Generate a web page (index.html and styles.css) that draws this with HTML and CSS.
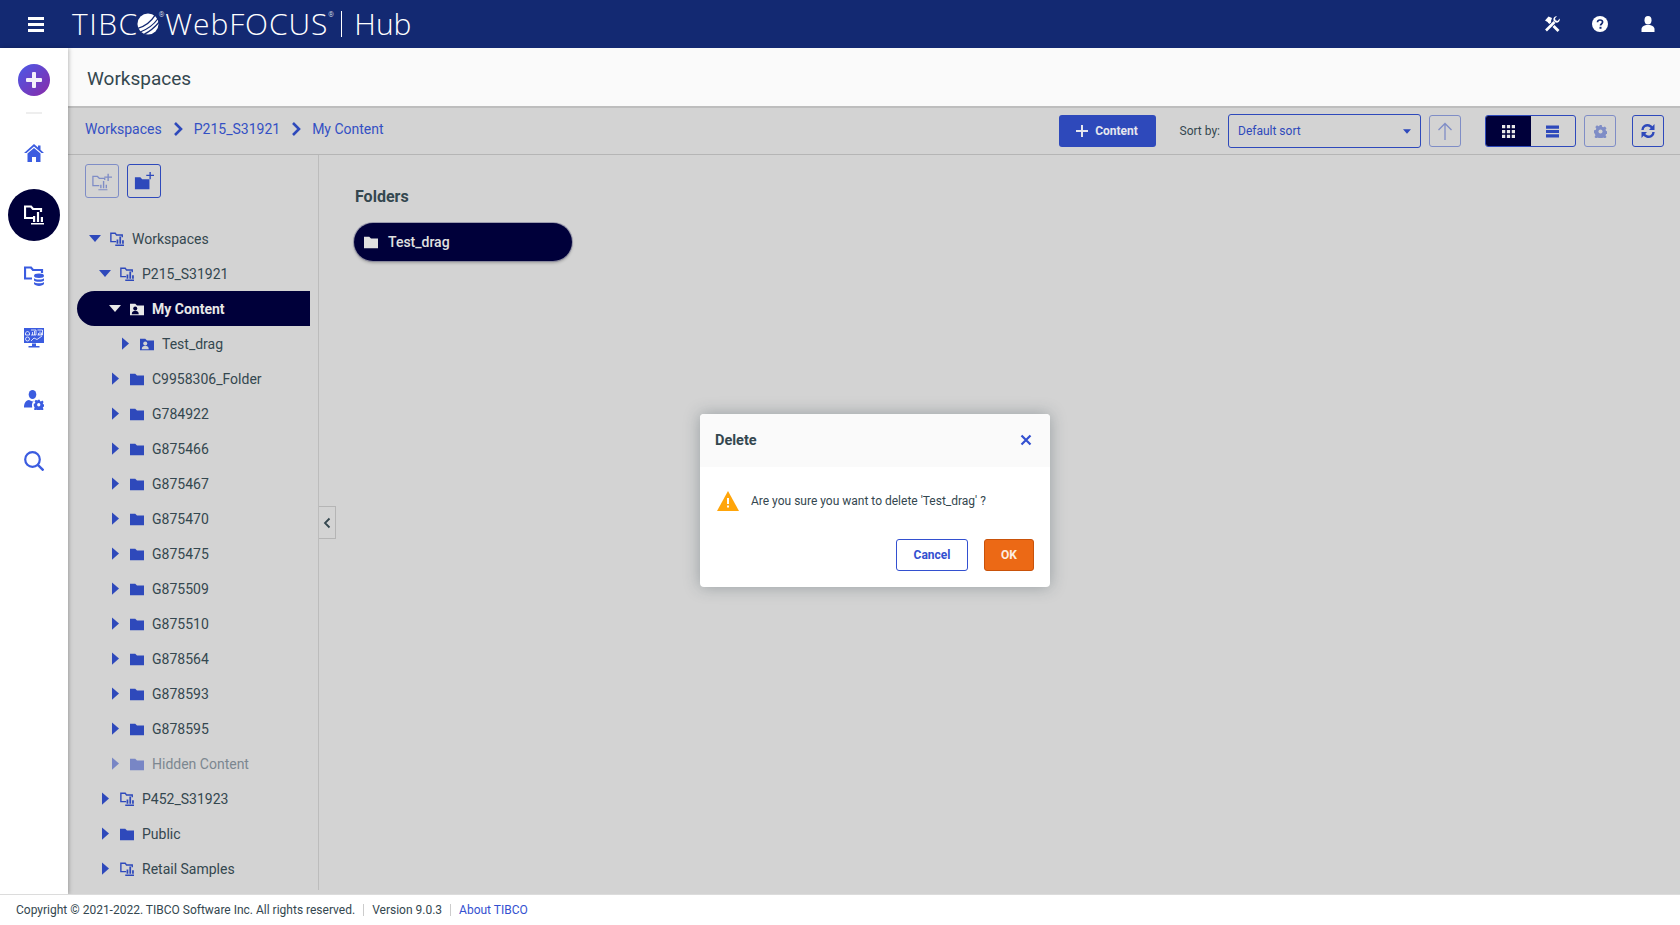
FILE: index.html
```html
<!DOCTYPE html>
<html lang="en">
<head>
    <meta charset="UTF-8">
    <meta name="viewport" content="width=device-width, initial-scale=1.0">
    <title>WebFOCUS Hub</title>
    <link rel="stylesheet" href="styles.css">
</head>
<body>
    <svg class="icon-defs" width="0" height="0">
        <symbol id="i-folder" viewBox="0 0 16 14"><path d="M0 1h6l2 2h8v11H0z" fill="currentColor"/></symbol>
        <symbol id="i-workspace" viewBox="0 0 16 16"><path d="M7 11H1V1.500h5l1.500 2H14V6" fill="none" stroke="currentColor" stroke-width="1.600"/><path d="M6 14.300h10V16H6zM7.500 8.500h2v4.800h-2zM10.700 5h2v8.300h-2zM13.800 9.500h2v3.800h-2z" fill="currentColor"/></symbol>
        <symbol id="i-mycontent" viewBox="0 0 16 14"><path d="M0 1h6l2 2h8v11H0z" fill="currentColor"/><circle cx="6" cy="6.500" r="2.300" fill="var(--cut)"/><path d="M2 13c0-3 2-4 4-4s4 1 4 4z" fill="var(--cut)"/></symbol>
        <symbol id="i-right" viewBox="0 0 8 14"><path d="M0 0l8 7-8 7z" fill="currentColor"/></symbol>
        <symbol id="i-down" viewBox="0 0 14 8"><path d="M0 0h14L7 8z" fill="currentColor"/></symbol>
        <symbol id="i-chevron" viewBox="0 0 10 14"><path d="M2 1l6 6-6 6" fill="none" stroke="currentColor" stroke-width="2.600"/></symbol>
        <symbol id="i-gear" viewBox="0 0 16 16"><path d="M6.500 0h3l.4 2.200 1.500.7 2-1.200 2 2.200-1.200 1.800.7 1.600 2.100.5v3l-2.100.4-.7 1.500 1.200 2-2 2-2-1.200-1.500.7-.4 2.200h-3l-.4-2.200-1.500-.7-2 1.200-2-2 1.200-2-.7-1.500L0 9.500v-3l2.100-.5.700-1.600L1.600 2.600l2-2.200 2 1.200 1.500-.7z" fill="currentColor"/><circle cx="8" cy="8" r="2.500" fill="var(--cut)"/></symbol>
    </svg>

    <header class="topbar">
        <div class="menu-btn"><span></span><span></span><span></span></div>
        <div class="logo">
            <span class="logo-tibco">TIBC</span>
            <svg class="logo-ball" viewBox="0 0 24 24"><circle cx="12" cy="12" r="11.500" fill="#fff"/><path d="M0 17C8 15 15 10 20 2M3 21C11 18 18 13 23 6M8 23C14 20 19 16 24 10" fill="none" stroke="#132972" stroke-width="1.400"/></svg>
            <sup class="logo-reg">®</sup>
            <span class="logo-web">WebFOCUS</span>
            <sup class="logo-reg">®</sup>
            <span class="logo-bar"></span>
            <span class="logo-hub">Hub</span>
        </div>
        <div class="top-icons">
            <svg class="top-icon" viewBox="0 0 16 16"><path d="M1 4.500L4.500 .500 8 2 7 5 5 7.500 3.500 6z" fill="#fff"/><path d="M5 5.500l9.500 9.500" stroke="#fff" stroke-width="2.800"/><path d="M2 14.500l8.500-8.500" stroke="#132972" stroke-width="4.200"/><path d="M2 14.500l8.500-8.500" stroke="#fff" stroke-width="2.600"/><path d="M15.700 2.500L13.500 5 11.500 4.300 11 2.300 13 .300C10.800-.200 8.800 1.800 9.500 4.500l2 2c2.700.7 4.800-1.200 4.200-4z" fill="#fff"/></svg>
            <svg class="top-icon" viewBox="0 0 16 16"><circle cx="8" cy="8" r="8" fill="#fff"/><path d="M5.500 6.200C5.600 4.700 6.600 4 8 4c1.500 0 2.600.8 2.600 2.100 0 1.900-2.100 1.800-2.100 3.400" fill="none" stroke="#132972" stroke-width="1.700"/><rect x="7.500" y="10.800" width="2" height="2" fill="#132972"/></svg>
            <svg class="top-icon" viewBox="0 0 16 16"><ellipse cx="8" cy="4.200" rx="3.500" ry="4.200" fill="#fff"/><path d="M1.500 16v-3c0-2.500 3-3.500 4.500-4h4c1.500.5 4.500 1.500 4.500 4v3z" fill="#fff"/></svg>
        </div>
    </header>

    <div class="app">
        <nav class="sidebar">
            <div class="add-btn"><span class="add-h"></span><span class="add-v"></span></div>
            <div class="side-rule"></div>
            <div class="side-item">
                <svg class="side-icon" viewBox="0 0 20 18"><path d="M10 0l4 3.500V1.500h2.500v4.200L20 9h-2.500L10 2.500 2.500 9H0z" fill="currentColor"/><path d="M3.500 9.500L10 4l6.500 5.500V18H12v-5H8v5H3.500z" fill="currentColor"/></svg>
            </div>
            <div class="side-item">
                <div class="side-active">
                    <svg class="side-icon" viewBox="0 0 20 20"><path d="M9 13H1V1.500h6l2 2.500h8v3" fill="none" stroke="currentColor" stroke-width="2.200"/><path d="M7 18h13v1.600H7zM9 11h2.200v6H9zM12.900 7h2.200v10h-2.200zM16.800 12H19v5h-2.200z" fill="currentColor"/></svg>
                </div>
            </div>
            <div class="side-item">
                <svg class="side-icon" viewBox="0 0 20 20"><path d="M8 12.500H1V1.500h6l2 2.500h9v3" fill="none" stroke="currentColor" stroke-width="2.200"/><ellipse cx="15" cy="9.800" rx="5" ry="2.200" fill="currentColor"/><path d="M10 12.200c1 1.800 9 1.800 10 0v2.200c-1 1.800-9 1.800-10 0zM10 16c1 1.800 9 1.800 10 0v1.800c-1 2.800-9 2.800-10 0z" fill="currentColor"/></svg>
            </div>
            <div class="side-item">
                <svg class="side-icon" viewBox="0 0 20 20"><path d="M0 0h20v15H0z" fill="currentColor"/><path d="M1.500 5l2-2 2 2v2h-4zM1.500 11a2 2 0 1 0 4 0 2 2 0 1 0-4 0M7 2h5v5H7M8.500 7V4M10.500 7V3M13.500 2h5v5h-5M14.500 7V5M16 7V3.500M17.500 7V4.500M7 13l3-3 3 1.500 5-3.500" fill="none" stroke="#fff" stroke-width=".8"/><path d="M8 15.500h4V18h3.500v1.500h-11V18H8z" fill="currentColor"/></svg>
            </div>
            <div class="side-item">
                <svg class="side-icon" viewBox="0 0 20 20"><ellipse cx="8.500" cy="4.500" rx="3.800" ry="4.500" fill="currentColor"/><path d="M0 17.500c0-4 1.500-7 5-7.500l3.500 1.500 2-1.200c-2 1.500-3 3.500-2.300 7.200z" fill="currentColor"/><use href="#i-gear" x="9.500" y="9.500" width="10.500" height="10.500"/></svg>
            </div>
            <div class="side-item">
                <svg class="side-icon" viewBox="0 0 20 20"><circle cx="8.500" cy="8.500" r="7.300" fill="none" stroke="currentColor" stroke-width="2.200"/><path d="M13.800 13.800L19.500 19.500" stroke="currentColor" stroke-width="2.400"/></svg>
            </div>
        </nav>

        <main class="main">
            <div class="title-bar">Workspaces</div>
            <div class="content-area">
                <div class="toolbar">
                    <div class="breadcrumbs">
                        <a>Workspaces</a>
                        <svg class="crumb-sep"><use href="#i-chevron"/></svg>
                        <a>P215_S31921</a>
                        <svg class="crumb-sep"><use href="#i-chevron"/></svg>
                        <a>My Content</a>
                    </div>
                    <div class="tools">
                        <button class="btn-content"><span class="plus"></span>Content</button>
                        <span class="sort-label">Sort by:</span>
                        <div class="sort-select">Default sort<svg class="sort-caret"><use href="#i-down"/></svg></div>
                        <div class="tool-btn disabled up-btn">
                            <svg class="tool-icon" viewBox="0 0 16 18"><path d="M8 18V2M1.500 8L8 1.500 14.500 8" fill="none" stroke="currentColor" stroke-width="1.300"/></svg>
                        </div>
                        <div class="view-toggle">
                            <div class="view-btn active">
                                <svg class="tool-icon small" viewBox="0 0 12 12"><path d="M0 0h3v3H0zM4.500 0h3v3h-3zM9 0h3v3H9zM0 4.500h3v3H0zM4.500 4.500h3v3h-3zM9 4.500h3v3H9zM0 9h3v3H0zM4.500 9h3v3h-3zM9 9h3v3H9z" fill="currentColor"/></svg>
                            </div>
                            <div class="view-btn">
                                <svg class="tool-icon small" viewBox="0 0 12 12"><path d="M0 .500h12v3H0zM0 4.700h12v2.600H0zM0 8.500h12v3H0z" fill="currentColor"/></svg>
                            </div>
                        </div>
                        <div class="tool-btn disabled gear-btn"><svg class="tool-icon small"><use href="#i-gear"/></svg></div>
                        <div class="tool-btn">
                            <svg class="tool-icon refresh" viewBox="0 0 14 16"><path d="M1.500 7C1.500 3.500 5 1.500 8 2.500c1.500.5 2.500 1.300 3.300 2.500M12.500 9c0 3.500-3.500 5.500-6.500 4.500-1.500-.5-2.500-1.300-3.300-2.500" fill="none" stroke="currentColor" stroke-width="2.400"/><path d="M13.500 1v6H8zM.5 15V9h5.500z" fill="currentColor"/></svg>
                        </div>
                    </div>
                </div>

                <div class="panes">
                    <aside class="tree-pane">
                        <div class="tree-actions">
                            <div class="tree-btn disabled">
                                <svg class="tree-btn-icon" viewBox="0 0 22 22"><path d="M8 16H1V6h5l2 2h6v2" fill="none" stroke="currentColor" stroke-width="1.400"/><path d="M7 20h10v1.200H7zM9 15h1.500v4H9zM12 11h1.500v8H12zM15 15h1.500v4H15zM17 3h1.500v3H22v1.500h-3.500V11H17V7.500h-3.500V6H17z" fill="currentColor"/></svg>
                            </div>
                            <div class="tree-btn">
                                <svg class="tree-btn-icon" viewBox="0 0 22 22"><path d="M1 7h6l2 2h8v11H1z" fill="currentColor"/><path d="M17 1h1.500v3H22v1.500h-3.500V9H17V5.500h-3.500V4H17z" fill="currentColor"/></svg>
                            </div>
                        </div>
                        <ul class="tree">
                            <li class="tree-row level-0"><svg class="caret-down"><use href="#i-down"/></svg><svg class="node-icon"><use href="#i-workspace"/></svg>Workspaces</li>
                            <li class="tree-row level-1"><svg class="caret-down"><use href="#i-down"/></svg><svg class="node-icon"><use href="#i-workspace"/></svg>P215_S31921</li>
                            <li class="tree-row level-2 selected"><svg class="caret-down"><use href="#i-down"/></svg><svg class="node-icon"><use href="#i-mycontent"/></svg>My Content</li>
                            <li class="tree-row level-3"><svg class="caret-right"><use href="#i-right"/></svg><svg class="node-icon"><use href="#i-mycontent"/></svg>Test_drag</li>
                            <li class="tree-row level-2"><svg class="caret-right"><use href="#i-right"/></svg><svg class="node-icon"><use href="#i-folder"/></svg>C9958306_Folder</li>
                            <li class="tree-row level-2"><svg class="caret-right"><use href="#i-right"/></svg><svg class="node-icon"><use href="#i-folder"/></svg>G784922</li>
                            <li class="tree-row level-2"><svg class="caret-right"><use href="#i-right"/></svg><svg class="node-icon"><use href="#i-folder"/></svg>G875466</li>
                            <li class="tree-row level-2"><svg class="caret-right"><use href="#i-right"/></svg><svg class="node-icon"><use href="#i-folder"/></svg>G875467</li>
                            <li class="tree-row level-2"><svg class="caret-right"><use href="#i-right"/></svg><svg class="node-icon"><use href="#i-folder"/></svg>G875470</li>
                            <li class="tree-row level-2"><svg class="caret-right"><use href="#i-right"/></svg><svg class="node-icon"><use href="#i-folder"/></svg>G875475</li>
                            <li class="tree-row level-2"><svg class="caret-right"><use href="#i-right"/></svg><svg class="node-icon"><use href="#i-folder"/></svg>G875509</li>
                            <li class="tree-row level-2"><svg class="caret-right"><use href="#i-right"/></svg><svg class="node-icon"><use href="#i-folder"/></svg>G875510</li>
                            <li class="tree-row level-2"><svg class="caret-right"><use href="#i-right"/></svg><svg class="node-icon"><use href="#i-folder"/></svg>G878564</li>
                            <li class="tree-row level-2"><svg class="caret-right"><use href="#i-right"/></svg><svg class="node-icon"><use href="#i-folder"/></svg>G878593</li>
                            <li class="tree-row level-2"><svg class="caret-right"><use href="#i-right"/></svg><svg class="node-icon"><use href="#i-folder"/></svg>G878595</li>
                            <li class="tree-row level-2 hidden-node"><svg class="caret-right"><use href="#i-right"/></svg><svg class="node-icon"><use href="#i-folder"/></svg>Hidden Content</li>
                            <li class="tree-row level-1"><svg class="caret-right"><use href="#i-right"/></svg><svg class="node-icon"><use href="#i-workspace"/></svg>P452_S31923</li>
                            <li class="tree-row level-1"><svg class="caret-right"><use href="#i-right"/></svg><svg class="node-icon"><use href="#i-folder"/></svg>Public</li>
                            <li class="tree-row level-1"><svg class="caret-right"><use href="#i-right"/></svg><svg class="node-icon"><use href="#i-workspace"/></svg>Retail Samples</li>
                        </ul>
                    </aside>
                    <section class="folders">
                        <div class="collapse-tab">
                            <svg class="collapse-icon" viewBox="0 0 8 12"><path d="M6.500 1.500L2 6l4.500 4.500" fill="none" stroke="currentColor" stroke-width="1.800"/></svg>
                        </div>
                        <h3 class="folders-title">Folders</h3>
                        <div class="folder-pill"><svg class="pill-icon"><use href="#i-folder"/></svg>Test_drag</div>
                    </section>
                </div>

                <div class="modal-layer">
                    <div class="modal">
                        <div class="modal-head">
                            <span>Delete</span>
                            <svg class="modal-close" viewBox="0 0 12 12"><path d="M1.500 1.500l9 9M10.500 1.500l-9 9" stroke="currentColor" stroke-width="2.200"/></svg>
                        </div>
                        <div class="modal-body">
                            <svg class="warn-icon" viewBox="0 0 22 20"><path d="M11 0l11 20H0z" fill="#ffa50a"/><path d="M10 7h2v6h-2zM10 14.500h2v2h-2z" fill="#fff"/></svg>
                            <span>Are you sure you want to delete 'Test_drag' ?</span>
                        </div>
                        <div class="modal-foot">
                            <button class="btn-cancel">Cancel</button>
                            <button class="btn-ok">OK</button>
                        </div>
                    </div>
                </div>
            </div>
        </main>
    </div>

    <footer class="footer">
        <span>Copyright © 2021-2022. TIBCO Software Inc. All rights reserved.</span>
        <span class="foot-sep"></span>
        <span>Version 9.0.3</span>
        <span class="foot-sep"></span>
        <a>About TIBCO</a>
    </footer>
</body>
</html>
```

FILE: styles.css
```css
* {
    box-sizing: border-box;
}

body {
    margin: 0;
    height: 925px;
    display: flex;
    flex-direction: column;
    overflow: hidden;
    font-family: Roboto, sans-serif;
    font-size: 14px;
    color: #34474f;
    background: #fff;
    --cut: #d3d3d3;
}

.icon-defs {
    position: absolute;
}

/* Top bar */
.topbar {
    height: 48px;
    flex: none;
    display: flex;
    align-items: center;
    background: #132972;
    color: #fff;
}

.menu-btn {
    width: 16px;
    margin-left: 28px;
    display: flex;
    flex-direction: column;
    gap: 3px;
}

.menu-btn span {
    height: 3px;
    background: #fff;
}

.logo {
    margin-left: 28px;
    display: flex;
    align-items: center;
    font-family: "Open Sans", sans-serif;
    font-weight: 300;
    font-size: 30px;
    line-height: 48px;
}

.logo-tibco {
    letter-spacing: 1.500px;
}

.logo-ball {
    width: 22px;
    height: 22px;
    margin-left: -2px;
}

.logo-reg {
    font-size: 7px;
    line-height: 7px;
    align-self: flex-start;
    margin-top: 12px;
    font-family: Roboto, sans-serif;
}

.logo-web {
    margin-left: 1px;
    letter-spacing: 0.900px;
}

.logo-bar {
    width: 1.500px;
    height: 26px;
    background: #fff;
    margin: 0 12px 0 7px;
}

.top-icons {
    margin-left: auto;
    margin-right: 24px;
    display: flex;
    gap: 32px;
}

.top-icon {
    width: 16px;
    height: 16px;
    display: block;
}

/* Sidebar */
.app {
    flex: 1;
    display: flex;
    min-height: 0;
}

.sidebar {
    width: 68px;
    flex: none;
    background: #fff;
    box-shadow: 1px 0 4px rgba(0, 0, 0, 0.25);
    display: flex;
    flex-direction: column;
    align-items: center;
    color: #3b5ce0;
    position: relative;
    z-index: 1;
    --cut: #fff;
}

.add-btn {
    width: 32px;
    height: 32px;
    margin-top: 16px;
    border-radius: 50%;
    background: linear-gradient(135deg, #4a5ae8, #8a2aa8);
    position: relative;
}

.add-h,
.add-v {
    position: absolute;
    background: #f3f0fa;
    border-radius: 1px;
}

.add-h {
    left: 8px;
    top: 14px;
    width: 16px;
    height: 4px;
}

.add-v {
    left: 14px;
    top: 8px;
    width: 4px;
    height: 16px;
}

.side-rule {
    width: 16px;
    height: 2px;
    background: #eeeeee;
    margin-top: 16px;
    margin-bottom: 8px;
}

.side-item {
    height: 61.700px;
    width: 100%;
    display: flex;
    align-items: center;
    justify-content: center;
}

.side-icon {
    width: 20px;
    height: 20px;
    display: block;
}

.side-active {
    width: 52px;
    height: 52px;
    border-radius: 50%;
    background: #00003a;
    color: #fff;
    display: flex;
    align-items: center;
    justify-content: center;
}

/* Main */
.main {
    flex: 1;
    min-width: 0;
    display: flex;
    flex-direction: column;
}

.title-bar {
    height: 60px;
    flex: none;
    padding: 3px 0 0 19px;
    display: flex;
    align-items: center;
    background: #fafafa;
    border-bottom: 2px solid #bdbdbd;
    font-size: 19px;
}

.content-area {
    flex: 1;
    min-height: 0;
    display: flex;
    flex-direction: column;
    position: relative;
    background: #d3d3d3;
}

.toolbar {
    height: 47px;
    flex: none;
    display: flex;
    align-items: center;
    justify-content: space-between;
    border-bottom: 1px solid #b5b5b5;
}

.breadcrumbs {
    margin-left: 17px;
    margin-top: -4px;
    display: flex;
    align-items: center;
    color: #3350c4;
}

.crumb-sep {
    width: 10px;
    height: 14px;
    margin: 0 11px;
    color: #2e49bb;
}

.tools {
    display: flex;
    align-items: center;
    margin-right: 16px;
    height: 100%;
}

.btn-content {
    width: 97px;
    height: 32px;
    margin-right: 24px;
    border: none;
    border-radius: 3px;
    background: #2e49bb;
    color: #e6e6ee;
    font: 700 12px Roboto, sans-serif;
    display: flex;
    align-items: center;
    justify-content: center;
    gap: 7px;
}

.plus {
    width: 12px;
    height: 12px;
    background:
        linear-gradient(#e6e6ee, #e6e6ee) center / 12px 2px no-repeat,
        linear-gradient(#e6e6ee, #e6e6ee) center / 2px 12px no-repeat;
}

.sort-label {
    font-size: 12px;
    margin-right: 8px;
}

.sort-select {
    width: 193px;
    height: 34px;
    border: 1px solid #2e49bb;
    border-radius: 3px;
    padding-left: 9px;
    display: flex;
    align-items: center;
    justify-content: space-between;
    font-size: 12px;
    color: #2e49bb;
    margin-right: 8px;
}

.sort-caret {
    width: 8px;
    height: 5px;
    margin-right: 9px;
}

.tool-btn {
    width: 32px;
    height: 32px;
    border: 1px solid #2e49bb;
    border-radius: 3px;
    display: flex;
    align-items: center;
    justify-content: center;
    color: #2e49bb;
}

.tool-btn.disabled {
    opacity: 0.5;
}

.up-btn {
    margin-right: 24px;
}

.gear-btn {
    margin-right: 16px;
}

.tool-icon {
    width: 16px;
    height: 18px;
    display: block;
}

.tool-icon.small {
    width: 13px;
    height: 13px;
}

.tool-icon.refresh {
    width: 14px;
    height: 16px;
}

.view-toggle {
    width: 91px;
    height: 32px;
    margin-right: 8px;
    display: flex;
    border: 1px solid #2e49bb;
    border-radius: 3px;
    overflow: hidden;
}

.view-btn {
    flex: 1;
    display: flex;
    align-items: center;
    justify-content: center;
    color: #2e49bb;
}

.view-btn.active {
    background: #00003a;
    color: #e8e8e8;
}

.panes {
    flex: 1;
    min-height: 0;
    display: flex;
}

/* Folder tree */
.tree-pane {
    width: 251px;
    flex: none;
    border-right: 1px solid #bcbcbc;
    margin-bottom: 4px;
}

.tree-actions {
    display: flex;
    gap: 8px;
    margin: 9px 0 0 17px;
}

.tree-btn {
    width: 34px;
    height: 34px;
    border: 1px solid #2e49bb;
    border-radius: 3px;
    display: flex;
    align-items: center;
    justify-content: center;
    color: #2e49bb;
}

.tree-btn.disabled {
    opacity: 0.5;
}

.tree-btn-icon {
    width: 20px;
    height: 20px;
}

.tree {
    list-style: none;
    margin: 23px 0 0 9px;
    padding: 0;
    width: 233px;
}

.tree-row {
    height: 35px;
    display: flex;
    align-items: center;
    white-space: nowrap;
    border-radius: 18px 0 0 18px;
}

.level-0 { padding-left: 12px; }
.level-1 { padding-left: 22px; }
.level-2 { padding-left: 32px; }
.level-3 { padding-left: 42px; }

.tree-row.selected {
    background: #00003a;
    color: #e8e8e8;
    font-weight: 700;
    --cut: #00003a;
}

.tree-row.hidden-node {
    color: #7c8790;
}

.hidden-node svg {
    opacity: 0.55;
}

.caret-down {
    width: 12px;
    height: 7px;
    color: #2e49bb;
    margin-right: 9px;
    flex: none;
}

.caret-right {
    width: 7px;
    height: 13px;
    color: #2e49bb;
    margin: 0 11px 0 3px;
    flex: none;
}

.node-icon {
    width: 14px;
    height: 14px;
    margin-right: 8px;
    color: #2e49bb;
    flex: none;
}

.selected .caret-down,
.selected .node-icon {
    color: #e8e8e8;
}

/* Folders area */
.folders {
    flex: 1;
    position: relative;
    padding: 32px 0 0 37px;
}

.folders-title {
    margin: 0 0 17px -1px;
    font-size: 16px;
    font-weight: 700;
    line-height: 19px;
}

.folder-pill {
    width: 218px;
    height: 38px;
    margin-left: -2px;
    padding-left: 10px;
    border-radius: 19px;
    background: #00003a;
    color: #e0e0e0;
    font-weight: 500;
    display: flex;
    align-items: center;
    box-shadow: 0 0 0 1px rgba(120, 120, 150, 0.6), 0 2px 3px rgba(0, 0, 0, 0.25);
}

.pill-icon {
    width: 14px;
    height: 14px;
    margin-right: 10px;
}

.collapse-tab {
    position: absolute;
    left: 0;
    top: 351px;
    width: 17px;
    height: 33px;
    background: #d3d3d3;
    border: 1px solid #b5b5b5;
    border-left: none;
    display: flex;
    align-items: center;
    justify-content: center;
    color: #34474f;
}

.collapse-icon {
    width: 8px;
    height: 12px;
}

/* Delete dialog */
.modal-layer {
    position: absolute;
    inset: 0;
    padding: 0 0 1px 2px;
    display: flex;
    align-items: center;
    justify-content: center;
}

.modal {
    width: 350px;
    height: 173px;
    background: #fff;
    border-radius: 4px;
    box-shadow: 0 0 16px rgba(40, 60, 70, 0.35);
    display: flex;
    flex-direction: column;
    overflow: hidden;
}

.modal-head {
    height: 53px;
    flex: none;
    background: #fafafa;
    padding: 0 18px 1px 15px;
    display: flex;
    align-items: center;
    justify-content: space-between;
    font-weight: 700;
    font-size: 14.500px;
}

.modal-close {
    width: 12px;
    height: 12px;
    color: #3350d0;
}

.modal-body {
    height: 67px;
    flex: none;
    padding-left: 17px;
    display: flex;
    align-items: center;
    font-size: 12px;
    gap: 12px;
}

.warn-icon {
    width: 22px;
    height: 20px;
}

.modal-foot {
    margin-top: 5px;
    display: flex;
    justify-content: flex-end;
    gap: 16px;
    padding-right: 16px;
}

.btn-cancel,
.btn-ok {
    height: 32px;
    border-radius: 3px;
    font: 700 12px Roboto, sans-serif;
}

.btn-cancel {
    width: 72px;
    background: #fff;
    border: 1px solid #3350d0;
    color: #3350d0;
}

.btn-ok {
    width: 50px;
    background: #ec6915;
    border: 1px solid #c9520a;
    color: #fdeee2;
}

/* Footer */
.footer {
    height: 31px;
    flex: none;
    padding-left: 16px;
    background: #fff;
    border-top: 1px solid #dcdcdc;
    display: flex;
    align-items: center;
    font-size: 12px;
    position: relative;
    z-index: 2;
}

.footer a {
    color: #3350d0;
}

.foot-sep {
    width: 1px;
    height: 12px;
    background: #ccc;
    margin: 0 8px;
}
```
